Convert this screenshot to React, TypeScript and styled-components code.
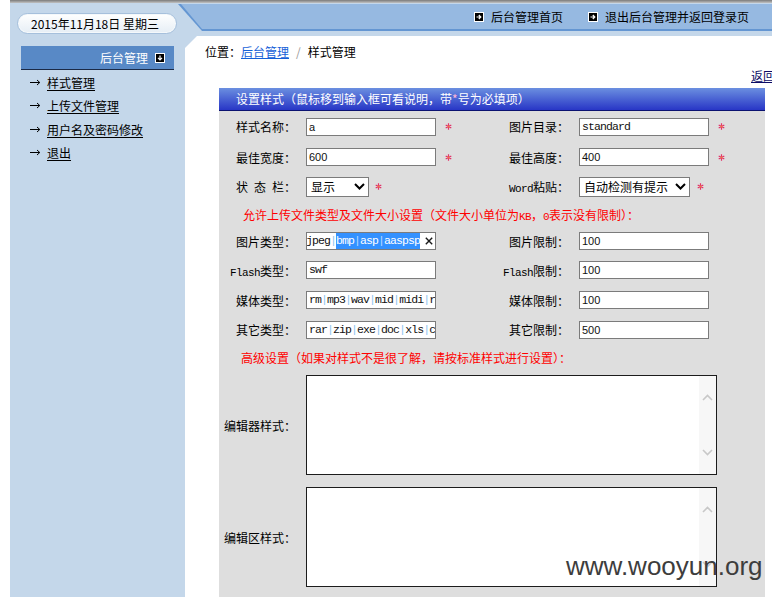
import React from 'react';
import styled, { createGlobalStyle } from 'styled-components';

const GlobalStyle = createGlobalStyle`
  html, body {
    margin: 0;
    padding: 0;
    background: #fff;
  }
  body {
    font-family: "Noto Sans CJK SC", "Liberation Sans", sans-serif;
    font-size: 12px;
    color: #000;
  }
`;

const Page = styled.div`
  position: relative;
  width: 772px;
  height: 597px;
  overflow: hidden;
  padding-left: 10px;
  box-sizing: border-box;
  display: flex;
  flex-direction: column;
  background: #fff;
`;

const TopLine = styled.div`
  height: 3px;
  flex: none;
  background: linear-gradient(#7a7a7a, #c2c2c2);
`;

const Header = styled.header`
  height: 33px;
  flex: none;
  display: flex;
  background: #c4d7ea;
`;

const DateArea = styled.div`
  width: 168px;
  flex: none;
  padding: 10px 0 0 7px;
  box-sizing: border-box;
`;

const DatePill = styled.div`
  width: 160px;
  height: 21px;
  box-sizing: border-box;
  border: 1px solid #a6c0dc;
  border-radius: 11px;
  box-shadow: inset 0 0 0 1px #f4f8fb;
  background: linear-gradient(#ffffff, #e6eef5);
  padding-left: 13px;
  line-height: 19px;
  white-space: nowrap;
`;

const Bar = styled.div`
  position: relative;
  flex: 1;
  margin-top: 1px;
  height: 27px;
  background: #6496d2;
  clip-path: polygon(0 0, 100% 0, 100% 100%, 24px 100%);
  display: flex;
  justify-content: flex-end;
  align-items: flex-start;
  padding-right: 23px;
  box-sizing: border-box;

  &::before {
    content: '';
    position: absolute;
    inset: 0 0 2px 3px;
    background: #96b9e1;
    clip-path: polygon(0 0, 100% 0, 100% 100%, 21px 100%);
  }
`;

const TopLink = styled.a`
  position: relative;
  display: flex;
  align-items: center;
  gap: 7px;
  height: 25px;
  color: #000;
  text-decoration: none;
  white-space: nowrap;
  margin-left: 25px;
`;

const Body = styled.div`
  flex: 1;
  display: flex;
  min-height: 0;
  background: #c4d7ea;
`;

const Sidebar = styled.aside`
  width: 175px;
  flex: none;
  padding-top: 10px;
`;

const SideHead = styled.div`
  margin: 0 11px;
  height: 23px;
  border-bottom: 1px solid #1b2a46;
  background: #5889c6;
  color: #fff;
  display: flex;
  justify-content: flex-end;
  align-items: center;
  gap: 7px;
  padding-right: 9px;
`;

const Menu = styled.ul`
  list-style: none;
  margin: 1px 0 0;
  padding: 0 0 0 20px;
`;

const MenuItem = styled.li`
  height: 23.3px;
  display: flex;
  align-items: center;
  gap: 6px;
`;

const MenuLink = styled.a`
  color: #000;
  text-decoration: underline;
  text-underline-offset: 2px;
`;

const Content = styled.main`
  flex: 1;
  min-width: 0;
  background: #fff;
  clip-path: polygon(12px 0, 100% 0, 100% 100%, 0 100%, 0 12px);
  overflow: hidden;
  padding-left: 20px;
`;

const Crumbs = styled.div`
  margin-top: 8px;
  line-height: 16px;
  white-space: nowrap;
`;

const CrumbLink = styled.a`
  color: #1560d8;
  text-decoration: underline;
`;

const CrumbSep = styled.span`
  color: #999;
  margin: 0 7px;
`;

const ReturnLink = styled.a`
  display: block;
  margin: 8px 0 0 546px;
  line-height: 16px;
  color: #0c0c66;
  text-decoration: underline;
  white-space: nowrap;
`;

const Panel = styled.section`
  margin: 4px 0 0 14px;
  width: 546px;
`;

const PanelHead = styled.div`
  height: 22px;
  line-height: 22px;
  border-bottom: 1px solid #0b1270;
  background: linear-gradient(#6b8fe0, #2836c6);
  color: #fff;
  padding-left: 17px;
  white-space: nowrap;
`;

const HeadStar = styled.span`
  color: #ffb5d5;
`;

const PanelBody = styled.div`
  background: #dedede;
  padding-bottom: 20px;
`;

const Row = styled.div<{ $h: number }>`
  height: ${(p) => p.$h}px;
  display: flex;
  align-items: center;
`;

const Label = styled.div<{ $w: number }>`
  width: ${(p) => p.$w}px;
  flex: none;
  box-sizing: border-box;
  padding-right: 10px;
  text-align: right;
  white-space: nowrap;
`;

const Field = styled.div<{ $w?: number }>`
  width: ${(p) => (p.$w ? `${p.$w}px` : 'auto')};
  flex: none;
  display: flex;
  align-items: center;
`;

const Mono = styled.span`
  font-family: "Liberation Mono", "DejaVu Sans Mono", monospace;
  font-size: 11px;
  letter-spacing: -0.6px;
`;

const TextBox = styled.div<{ $mono?: boolean }>`
  width: 130px;
  height: 18px;
  box-sizing: border-box;
  border: 1px solid #7b7b7b;
  background: #fff;
  padding: 0 2px;
  line-height: 16px;
  overflow: hidden;
  white-space: nowrap;
  display: flex;
  align-items: center;
  font-family: ${(p) =>
    p.$mono ? '"Liberation Mono", "DejaVu Sans Mono", monospace' : '"Liberation Sans", sans-serif'};
  font-size: ${(p) => (p.$mono ? '11.5px' : '11px')};
  letter-spacing: ${(p) => (p.$mono ? '-0.9px' : '0')};
  color: #111;
`;

const Sep = styled.span`
  color: #8cc3f0;
`;

const Selected = styled.span`
  background: #3391ff;
  color: #fff;
`;

const ClearIcon = styled.svg`
  margin-left: auto;
  flex: none;
`;

const SelectBox = styled.div<{ $w: number }>`
  width: ${(p) => p.$w}px;
  height: 20px;
  box-sizing: border-box;
  border: 1px solid #7b7b7b;
  background: #fff;
  display: flex;
  align-items: center;
  justify-content: space-between;
  padding: 0 3px 0 4px;
  white-space: nowrap;
`;

const StarIcon = styled.svg<{ $gap: number }>`
  margin-left: ${(p) => p.$gap}px;
  flex: none;
`;

const Notice = styled.div<{ $pad: number }>`
  padding-left: ${(p) => p.$pad}px;
  color: #f00;
  white-space: nowrap;
`;

const AreaBox = styled.div`
  width: 411px;
  height: 100px;
  box-sizing: border-box;
  border: 1px solid #1c1c1c;
  background: #fff;
  display: flex;
  justify-content: flex-end;
`;

const ScrollTrack = styled.div`
  width: 17px;
  background: #f7f7f7;
  display: flex;
  flex-direction: column;
  justify-content: space-between;
  align-items: center;
  padding: 18px 0;
`;

const Watermark = styled.div`
  position: absolute;
  left: 566px;
  top: 551px;
  font-family: "Liberation Sans", Arial, sans-serif;
  font-size: 26px;
  line-height: 30px;
  color: #3d3d3d;
  white-space: nowrap;
`;

const BoxArrow = ({ dir }: { dir: 'right' | 'down' }) => (
  <svg width="10" height="10" viewBox="0 0 10 10">
    <rect x="0" y="0" width="10" height="10" fill="#fff" />
    <rect x="1" y="1" width="8" height="8" fill="#000" />
    {dir === 'right' ? (
      <path d="M2.5 5h4.2M4.8 3l2 2-2 2" stroke="#fff" strokeWidth="1.2" fill="none" />
    ) : (
      <path d="M5 2.5v4.2M3 4.8l2 2 2-2" stroke="#fff" strokeWidth="1.2" fill="none" />
    )}
  </svg>
);

const MenuArrow = () => (
  <svg width="11" height="7" viewBox="0 0 11 7">
    <path d="M0 3.5h9.5M7 1l2.8 2.5L7 6" stroke="#000" strokeWidth="1" fill="none" />
  </svg>
);

const Star = ({ gap = 9 }: { gap?: number }) => (
  <StarIcon $gap={gap} width="7" height="7" viewBox="0 0 7 7">
    <path d="M3.5 0.3v6.4M0.7 1.9l5.6 3.2M0.7 5.1l5.6-3.2" stroke="#e2336a" strokeWidth="1.2" />
    <circle cx="3.5" cy="3.5" r="1" fill="#f07a3a" />
  </StarIcon>
);

const Chevron = ({ up, color = '#000', w = 11, sw = 2 }: { up?: boolean; color?: string; w?: number; sw?: number }) => (
  <svg width={w} height="7" viewBox="0 0 11 7">
    <path d={up ? 'M1 6l4.5-4.5L10 6' : 'M1 1l4.5 4.5L10 1'} stroke={color} strokeWidth={sw} fill="none" />
  </svg>
);

const PipeText = ({ value }: { value: string }) => {
  const parts = value.split('|');
  return (
    <>
      {parts.map((p, i) => (
        <React.Fragment key={i}>
          {i > 0 && <Sep>|</Sep>}
          {p}
        </React.Fragment>
      ))}
    </>
  );
};

const TextArea = () => (
  <AreaBox>
    <ScrollTrack>
      <Chevron up color="#c8c8c8" w={11} sw={1.6} />
      <Chevron color="#c8c8c8" w={11} sw={1.6} />
    </ScrollTrack>
  </AreaBox>
);

const menu = ['样式管理', '上传文件管理', '用户名及密码修改', '退出'];

const App: React.FC = () => {
  return (
    <>
      <GlobalStyle />
      <Page>
        <TopLine />
        <Header>
          <DateArea>
            <DatePill>2015年11月18日 星期三</DatePill>
          </DateArea>
          <Bar>
            <TopLink href="#">
              <BoxArrow dir="right" />
              后台管理首页
            </TopLink>
            <TopLink href="#">
              <BoxArrow dir="right" />
              退出后台管理并返回登录页
            </TopLink>
          </Bar>
        </Header>
        <Body>
          <Sidebar>
            <SideHead>
              后台管理
              <BoxArrow dir="down" />
            </SideHead>
            <Menu>
              {menu.map((m) => (
                <MenuItem key={m}>
                  <MenuArrow />
                  <MenuLink href="#">{m}</MenuLink>
                </MenuItem>
              ))}
            </Menu>
          </Sidebar>
          <Content>
            <Crumbs>
              位置：<CrumbLink href="#">后台管理</CrumbLink>
              <CrumbSep>/</CrumbSep>样式管理
            </Crumbs>
            <ReturnLink href="#">返回</ReturnLink>
            <Panel>
              <PanelHead>
                设置样式（鼠标移到输入框可看说明，带<HeadStar>*</HeadStar>号为必填项）
              </PanelHead>
              <PanelBody>
                <Row $h={31}>
                  <Label $w={87}>样式名称：</Label>
                  <Field $w={170}>
                    <TextBox>a</TextBox>
                    <Star />
                  </Field>
                  <Label $w={103}>图片目录：</Label>
                  <Field>
                    <TextBox $mono>standard</TextBox>
                    <Star />
                  </Field>
                </Row>
                <Row $h={30}>
                  <Label $w={87}>最佳宽度：</Label>
                  <Field $w={170}>
                    <TextBox>600</TextBox>
                    <Star />
                  </Field>
                  <Label $w={103}>最佳高度：</Label>
                  <Field>
                    <TextBox>400</TextBox>
                    <Star />
                  </Field>
                </Row>
                <Row $h={29}>
                  <Label $w={87}>状{'\u2002'}态{'\u2002'}栏：</Label>
                  <Field $w={170}>
                    <SelectBox $w={63}>
                      显示
                      <Chevron />
                    </SelectBox>
                    <Star gap={6} />
                  </Field>
                  <Label $w={103}>
                    <Mono>Word</Mono>粘贴：
                  </Label>
                  <Field>
                    <SelectBox $w={111}>
                      自动检测有提示
                      <Chevron />
                    </SelectBox>
                    <Star gap={7} />
                  </Field>
                </Row>
                <Row $h={26}>
                  <Notice $pad={24}>
                    允许上传文件类型及文件大小设置（文件大小单位为<Mono>KB</Mono>，<Mono>0</Mono>表示没有限制）：
                  </Notice>
                </Row>
                <Row $h={28}>
                  <Label $w={87}>图片类型：</Label>
                  <Field $w={170}>
                    <TextBox $mono>
                      <span style={{ marginLeft: -3 }}>jpeg</span>
                      <Sep>|</Sep>
                      <Selected>
                        bmp<Sep style={{ color: '#b8dcff' }}>|</Sep>asp<Sep style={{ color: '#b8dcff' }}>|</Sep>aaspsp
                      </Selected>
                      <ClearIcon width="8" height="8" viewBox="0 0 8 8">
                        <path d="M0.8 0.8l6.4 6.4M7.2 0.8L0.8 7.2" stroke="#1a1a1a" strokeWidth="1.4" />
                      </ClearIcon>
                    </TextBox>
                  </Field>
                  <Label $w={103}>图片限制：</Label>
                  <Field>
                    <TextBox>100</TextBox>
                  </Field>
                </Row>
                <Row $h={30}>
                  <Label $w={87}>
                    <Mono>Flash</Mono>类型：
                  </Label>
                  <Field $w={170}>
                    <TextBox $mono>swf</TextBox>
                  </Field>
                  <Label $w={103}>
                    <Mono>Flash</Mono>限制：
                  </Label>
                  <Field>
                    <TextBox>100</TextBox>
                  </Field>
                </Row>
                <Row $h={30}>
                  <Label $w={87}>媒体类型：</Label>
                  <Field $w={170}>
                    <TextBox $mono>
                      <PipeText value="rm|mp3|wav|mid|midi|ra|rmvb" />
                    </TextBox>
                  </Field>
                  <Label $w={103}>媒体限制：</Label>
                  <Field>
                    <TextBox>100</TextBox>
                  </Field>
                </Row>
                <Row $h={29}>
                  <Label $w={87}>其它类型：</Label>
                  <Field $w={170}>
                    <TextBox $mono>
                      <PipeText value="rar|zip|exe|doc|xls|chm|hlp" />
                    </TextBox>
                  </Field>
                  <Label $w={103}>其它限制：</Label>
                  <Field>
                    <TextBox>500</TextBox>
                  </Field>
                </Row>
                <Row $h={26}>
                  <Notice $pad={22}>高级设置（如果对样式不是很了解，请按标准样式进行设置）：</Notice>
                </Row>
                <Row $h={110}>
                  <Label $w={87}>编辑器样式：</Label>
                  <TextArea />
                </Row>
                <Row $h={114}>
                  <Label $w={87}>编辑区样式：</Label>
                  <TextArea />
                </Row>
              </PanelBody>
            </Panel>
          </Content>
        </Body>
        <Watermark>www.wooyun.org</Watermark>
      </Page>
    </>
  );
};

export default App;
